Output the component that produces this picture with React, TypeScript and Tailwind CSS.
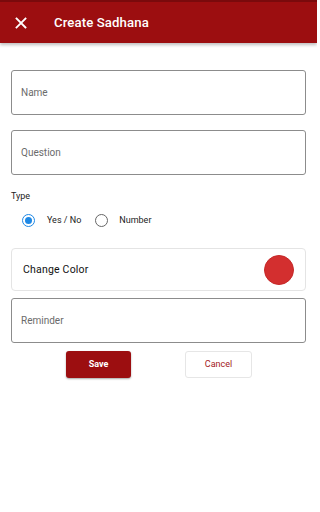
import React from "react";

function Field({ label }: { label: string }) {
  return (
    <div className="h-[45px] rounded-[3px] border border-[#8c8c8c] flex items-center pl-[9px] text-[10px] text-[#6b6b6b]">
      {label}
    </div>
  );
}

export default function App() {
  return (
    <div className="w-[317px] h-[512px] bg-white font-['Roboto',sans-serif] relative overflow-hidden">
      <div className="relative z-10 shadow-[0_2px_3px_rgba(0,0,0,0.25)]">
        <div className="h-[2px] bg-[#7a0a0c]" />
        <div className="h-[41px] bg-[#9c0e10] flex items-center">
          <svg className="ml-[15px] w-[12px] h-[12px]" viewBox="0 0 12 12">
            <path d="M1.5 1.5L10.5 10.5M10.5 1.5L1.5 10.5" stroke="white" strokeWidth="1.8" strokeLinecap="square" />
          </svg>
          <span className="ml-[27px] text-white text-[13.2px] font-medium tracking-[0.1px]">Create Sadhana</span>
        </div>
      </div>
      <div className="px-[11px] pt-[27px] flex flex-col">
        <Field label="Name" />
        <div className="h-[15px]" />
        <Field label="Question" />
        <div className="mt-[15px] text-[9px] text-[#222]">Type</div>
        <div className="mt-[10px] flex items-center text-[9px] text-[#222]">
          <span className="ml-[11px] w-[13px] h-[13px] rounded-full border-[1.5px] border-[#1e88e5] flex items-center justify-center">
            <span className="w-[7px] h-[7px] rounded-full bg-[#1e88e5]" />
          </span>
          <span className="ml-[12px]">Yes / No</span>
          <span className="ml-[14px] w-[13px] h-[13px] rounded-full border-[1.5px] border-[#666]" />
          <span className="ml-[11px]">Number</span>
        </div>
        <div className="mt-[21px] h-[43px] rounded-[4px] border border-[#e4e4e4] flex items-center justify-between pl-[11px] pr-[11px]">
          <span className="text-[10.5px] tracking-[0.2px] text-[#111]">Change Color</span>
          <span className="w-[30px] h-[30px] rounded-full bg-[#d32f2f] border border-[#c62828]" />
        </div>
        <div className="h-[7px]" />
        <Field label="Reminder" />
        <div className="mt-[8px] flex">
          <div className="ml-[55px] w-[65px] h-[27px] rounded-[3px] bg-[#9c0e10] shadow-[0_1px_2px_rgba(0,0,0,0.35)] flex items-center justify-center text-white text-[9px] font-bold">
            Save
          </div>
          <div className="ml-[54px] w-[67px] h-[27px] rounded-[3px] border border-[#e6e6e6] bg-white flex items-center justify-center text-[#a3181c] text-[9px]">
            Cancel
          </div>
        </div>
      </div>
    </div>
  );
}
